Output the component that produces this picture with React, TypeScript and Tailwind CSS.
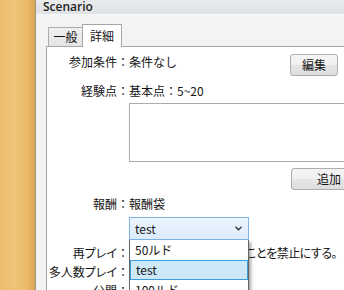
const Label = ({ text }: { text: string }) => (
  <div className="w-[82px] shrink-0 whitespace-nowrap text-right leading-[16px]">
    <span className="[font-feature-settings:'palt']">{text}</span>
    <span>：</span>
  </div>
);

const Button = ({ label, className }: { label: string; className: string }) => (
  <div
    className={`flex h-[22px] shrink-0 items-center justify-center rounded-[3px] border border-[#adadad] bg-[linear-gradient(#f4f4f4,#f0f0f0_50%,#e6e6e6_50%,#dedede)] leading-[16px] ${className}`}
  >
    {label}
  </div>
);

const rewards = ["50ルド", "test", "100ルド"];

export default function App() {
  return (
    <div className="flex h-[290px] w-[344px] overflow-hidden bg-white font-['Noto_Sans_CJK_JP',sans-serif] text-[12px] text-[#141414]">
      {/* desk */}
      <div className="w-[35px] shrink-0 bg-[linear-gradient(90deg,#ebbd6c,#efc57b_40%,#e9b967_80%,#d9a555)]" />
      <div className="w-px shrink-0 bg-[#9b9488]" />

      {/* window */}
      <div className="flex w-[420px] shrink-0 flex-col bg-[#f1f3f5]">
        <div className="h-[14px] shrink-0 bg-[linear-gradient(#e9ebed,#dfe2e6)] pl-[7px] font-['Open_Sans',sans-serif] text-[12px] font-semibold leading-[14px] text-[#1e1e1e]">
          Scenario
        </div>
        <div className="h-px shrink-0 bg-[#f8f9fa]" />

        <div className="flex flex-1 flex-col pl-[10px]">
          {/* tabs */}
          <div className="mt-[9px] flex h-[22px] items-end pl-[2px]">
            <div className="flex h-[19px] w-[35px] items-center justify-center border border-b-0 border-[#acacac] bg-[linear-gradient(#f0f0f0,#e4e4e4)] leading-[16px]">
              一般
            </div>
            <div className="relative z-10 -mb-px -ml-px flex h-[23px] w-[40px] items-start justify-center border border-b-0 border-[#a6a6a6] bg-white pt-[3px] leading-[16px]">
              詳細
            </div>
          </div>

          {/* panel */}
          <div className="relative flex flex-1 flex-col border-l border-t border-[#a6a6a6] bg-white">
            <div className="mt-[7px] flex items-start">
              <Label text="参加条件" />
              <div className="w-[161px] leading-[16px]">条件なし</div>
              <Button label="編集" className="w-[48px]" />
            </div>

            <div className="mt-[7px] flex items-start">
              <Label text="経験点" />
              <div className="leading-[16px]">基本点：5~20</div>
            </div>

            <div className="mt-[4px] flex">
              <div className="w-[82px] shrink-0" />
              <div className="h-[59px] w-[280px] border border-[#acacac] bg-white" />
            </div>

            <div className="mt-[6px] flex pl-[244px]">
              <Button label="追加" className="w-[76px]" />
            </div>

            <div className="mt-[6px] flex items-start">
              <Label text="報酬" />
              <div className="leading-[16px]">報酬袋</div>
            </div>

            <div className="mt-[5px] flex">
              <div className="w-[82px] shrink-0" />
              <div className="relative z-20 h-[23px] w-[120px]">
                <div className="flex h-full items-center justify-between border border-[#7eb4ea] bg-[linear-gradient(#ecf4fc,#dcecfc)] pl-[5px] pr-[6px] leading-[16px]">
                  <span>test</span>
                  <svg width="7" height="5" viewBox="0 0 7 5">
                    <path d="M0.5 0.8 L3.5 3.8 L6.5 0.8" fill="none" stroke="#303030" strokeWidth="1.3" />
                  </svg>
                </div>
                <div className="absolute left-0 top-full w-[120px] border border-t-0 border-[#646464] bg-white shadow-[2px_2px_3px_rgba(0,0,0,0.35)]">
                  {rewards.map((item) => (
                    <div
                      key={item}
                      className={`flex h-[20px] items-center pl-[5px] leading-[16px] ${
                        item === "test" ? "border border-[#3a9fdb] bg-[#cde8f8] pl-[4px]" : ""
                      }`}
                    >
                      {item}
                    </div>
                  ))}
                </div>
              </div>
            </div>

            <div className="mt-[5px] flex items-start">
              <Label text="再プレイ" />
              <div className="flex w-[208px] justify-end whitespace-nowrap leading-[16px]">
                <span className="tracking-[-0.5px] [font-feature-settings:'palt']">再プレイすることを禁止にする。</span>
              </div>
            </div>

            <div className="mt-[3px] flex items-start">
              <Label text="多人数プレイ" />
            </div>

            <div className="mt-[3px] flex items-start">
              <Label text="公開" />
            </div>
          </div>
        </div>
      </div>
    </div>
  );
}
